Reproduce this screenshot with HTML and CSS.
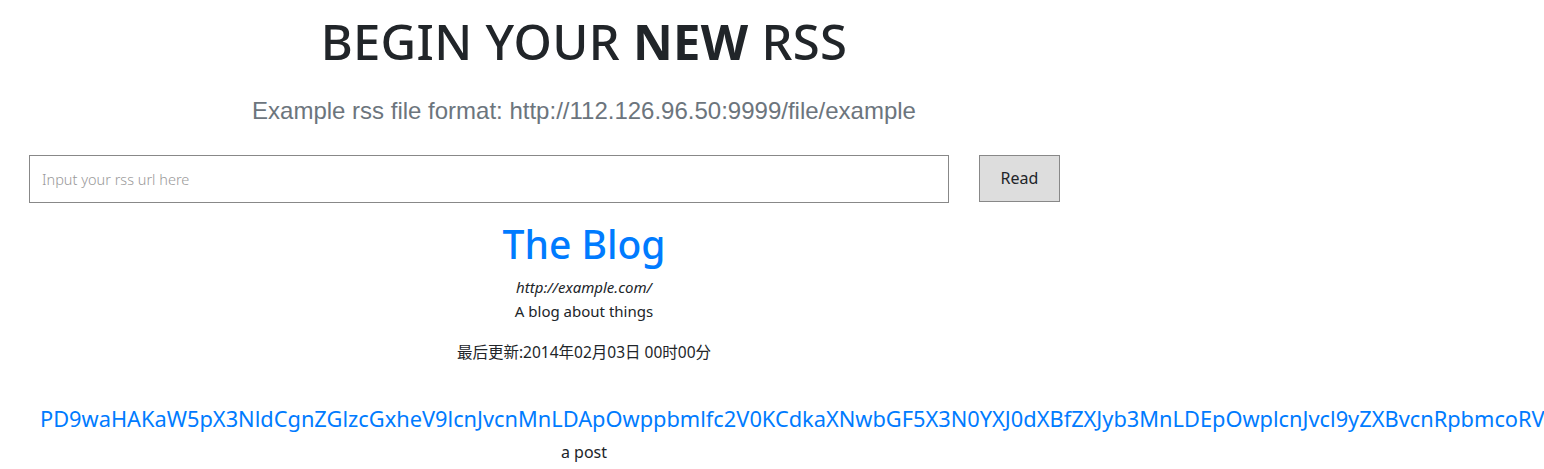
FILE: index.html
```html
<!DOCTYPE html>
<html lang="zh">
<head>
<meta charset="utf-8">
<title>RSS Reader</title>
<link rel="stylesheet" href="styles.css">
</head>
<body>
<main class="page">
  <section class="hero">
    <h1 class="title">BEGIN YOUR <b>NEW</b> RSS</h1>
    <p class="lead">Example rss file format: http://112.126.96.50:9999/file/example</p>
  </section>
  <form class="reader">
    <input class="reader-input" type="text" placeholder="Input your rss url here">
    <button class="reader-btn" type="button">Read</button>
  </form>
  <section class="feed">
    <h2 class="feed-title"><a href="#">The Blog</a></h2>
    <p class="feed-url">http://example.com/</p>
    <p class="feed-desc">A blog about things</p>
    <p class="feed-updated">最后更新:2014年02月03日 00时00分</p>
    <article class="post">
      <h3 class="post-title"><a href="#">PD9waHAKaW5pX3NldCgnZGlzcGxheV9lcnJvcnMnLDApOwppbmlfc2V0KCdkaXNwbGF5X3N0YXJ0dXBfZXJyb3MnLDEpOwplcnJvcl9yZXBvcnRpbmcoRV9BTEwpOwo=</a></h3>
      <p class="post-desc">a post</p>
    </article>
  </section>
</main>
</body>
</html>
```

FILE: styles.css
```css
html, body {
  margin: 0;
  padding: 0;
  background: #fff;
  overflow: hidden;
}

body {
  font-family: "Noto Sans", "Noto Sans CJK SC", sans-serif;
  color: #212529;
  font-size: 16px;
  line-height: 1.5;
}

.page {
  width: 1168px;
  display: flex;
  flex-direction: column;
}

.hero {
  display: flex;
  flex-direction: column;
  align-items: center;
  padding-top: 12px;
}

.title {
  margin: 0;
  font-size: 49px;
  font-weight: 500;
  line-height: 1.2;
  letter-spacing: 0.3px;
  color: #212529;
}

.title b {
  font-weight: 700;
}

.lead {
  margin: 22px 0 0;
  font-family: "Liberation Sans", Arial, sans-serif;
  font-size: 24px;
  line-height: 1.5;
  color: #6c757d;
}

.reader {
  display: flex;
  align-items: flex-start;
  gap: 30px;
  margin: 26px 0 0 29px;
}

.reader-input {
  box-sizing: border-box;
  width: 920px;
  height: 48px;
  border: 1px solid #888;
  padding: 0 12px;
  font-family: "Noto Sans", sans-serif;
  font-size: 14.5px;
  color: #333;
  outline: none;
}

.reader-input::placeholder {
  color: #999;
  font-weight: 300;
}

.reader-btn {
  box-sizing: border-box;
  width: 81px;
  height: 47px;
  background: #ddd;
  border: 1px solid #888;
  font-family: "Noto Sans", sans-serif;
  font-size: 16px;
  color: #212529;
  padding: 0;
}

.feed {
  display: flex;
  flex-direction: column;
  align-items: center;
  text-align: center;
}

.feed-title {
  margin: 18px 0 0;
  font-size: 39px;
  font-weight: 500;
  line-height: 1.2;
}

.feed-title a,
.post-title a {
  color: #007bff;
  text-decoration: none;
}

.feed-url {
  margin: 7px 0 0;
  font-style: italic;
  font-size: 15px;
  line-height: 24px;
}

.feed-desc {
  margin: 0;
  font-size: 15px;
  line-height: 24px;
}

.feed-updated {
  margin: 18px 0 0;
  font-size: 15.5px;
}

.post {
  align-self: stretch;
  padding: 0 40px;
  margin-top: 40px;
}

.post-title {
  margin: 0;
  font-size: 21.8px;
  font-weight: 400;
  line-height: 1.4;
  white-space: nowrap;
  text-align: left;
}

.post-desc {
  margin: 6px 0 0;
  font-size: 16px;
  text-align: center;
}
```
